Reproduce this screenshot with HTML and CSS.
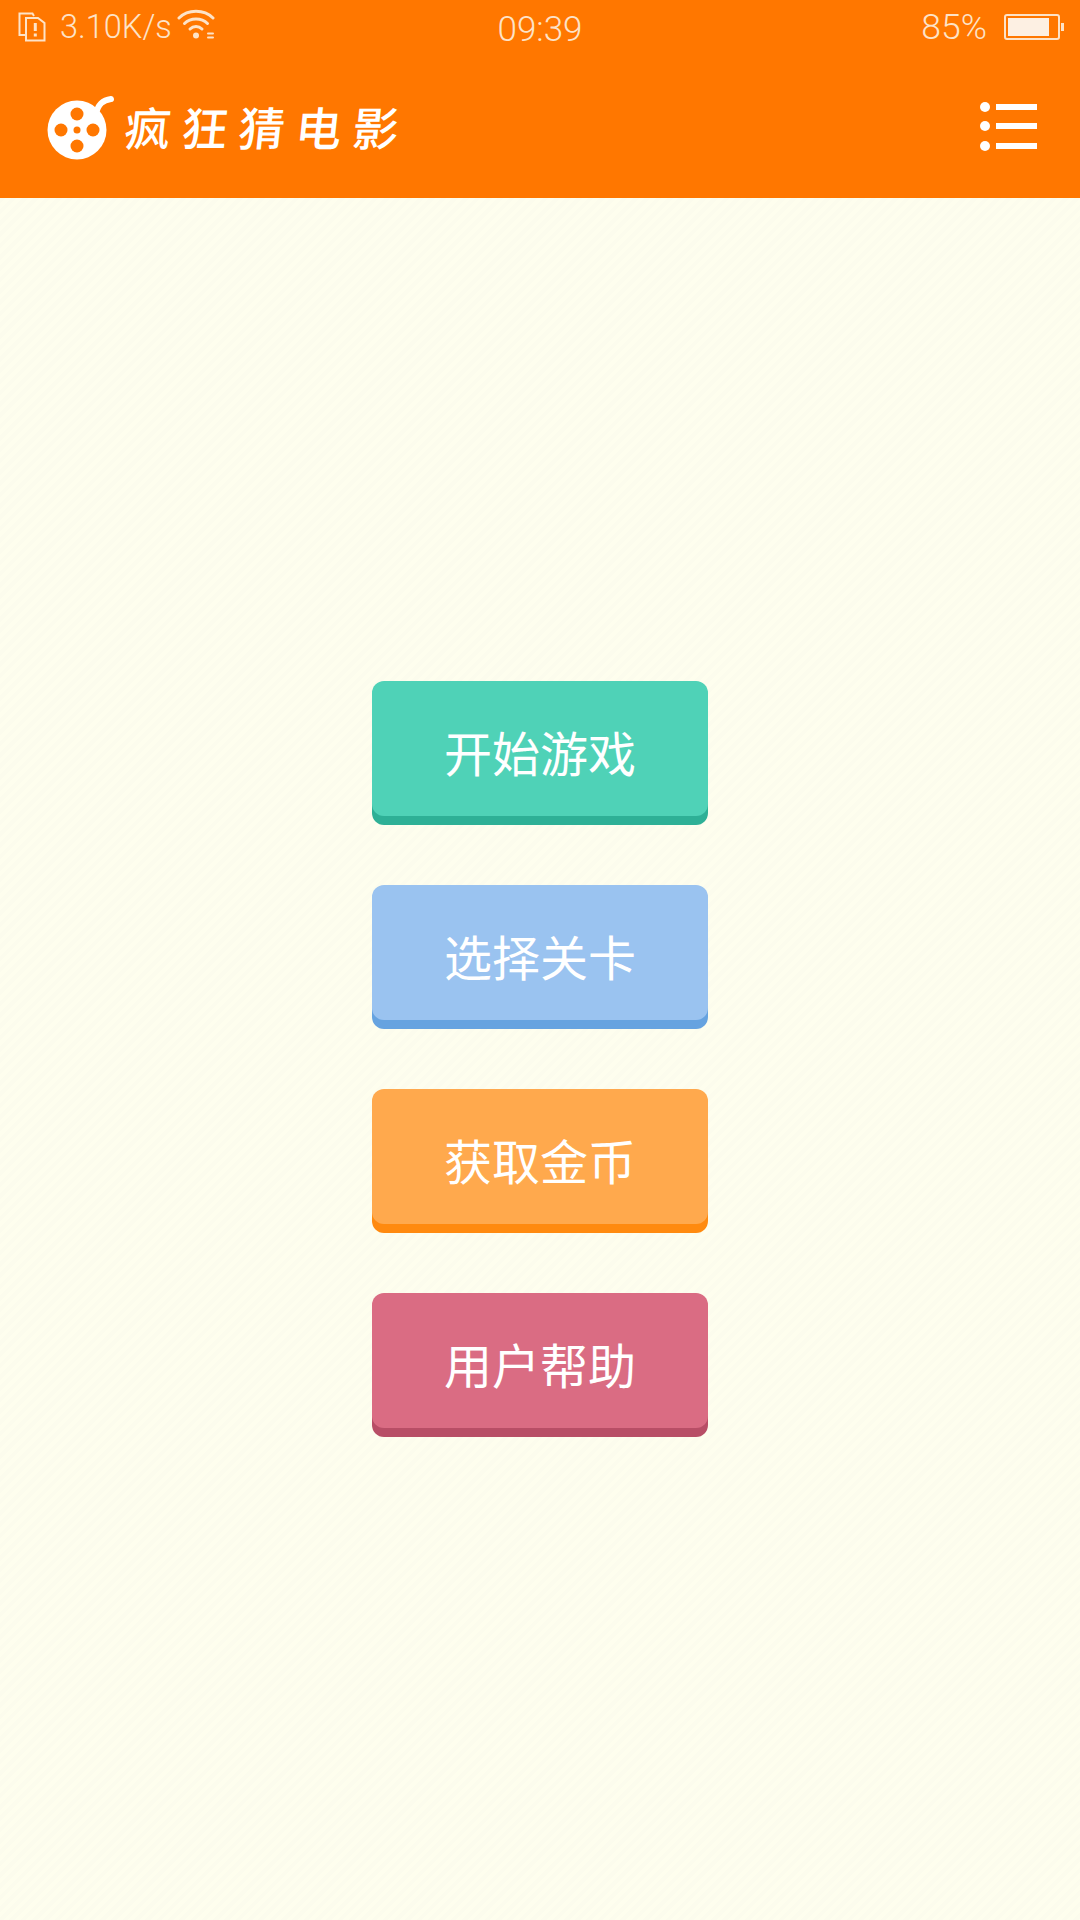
FILE: index.html
```html
<!DOCTYPE html>
<html lang="zh-CN">

	<head>
		<meta charset="UTF-8">
		<meta name="viewport" content="width=device-width, initial-scale=1.0">
		<title>疯狂猜电影</title>
		<link rel="stylesheet" href="styles.css">
	</head>

	<body>

		<!-- 状态栏 -->
		<div class="statusbar">
			<div class="status-left">
				<svg class="sim-icon" width="28" height="30" viewBox="0 0 28 30" fill="none" stroke="#fde3c8" stroke-width="2">
					<path d="M8 23H1.500V1.500H14.500L16 4" />
					<path d="M8 6H20L26.500 11V28.500H8Z" />
					<path d="M17.300 11V19M17.300 21.500V24.500" stroke-width="3" />
				</svg>
				<span class="speed">3.10K/s</span>
				<svg class="wifi-icon" width="38" height="30" viewBox="0 0 38 30" fill="none" stroke="#fde3c8" stroke-width="3" stroke-linecap="round">
					<path d="M2 9C11 0 27 0 36 9" />
					<path d="M7.500 14.500C13.500 8.500 24.500 8.500 30.500 14.500" />
					<path d="M13 20C16.500 16.500 21.500 16.500 25 20" />
					<circle cx="19" cy="26.500" r="3" fill="#fde3c8" stroke="none" />
					<path d="M31 24.500H36M31 28.500H36" stroke-width="2" />
				</svg>
			</div>
			<span class="clock">09:39</span>
			<div class="status-right">
				<span class="percent">85%</span>
				<div class="battery">
					<div class="battery-level"></div>
				</div>
				<div class="battery-cap"></div>
			</div>
		</div>

		<!-- 标题栏 -->
		<div class="toolbar">
			<div class="brand">
				<svg class="logo" width="68" height="68" viewBox="0 0 68 68">
					<path d="M49 22C51 12 56 8 64 7" fill="none" stroke="#fff" stroke-width="6" stroke-linecap="round" />
					<circle cx="30" cy="38" r="29.500" fill="#fff" />
					<g fill="#ff7700">
						<circle cx="30" cy="22" r="6.500" />
						<circle cx="30" cy="54" r="6.500" />
						<circle cx="14" cy="38" r="6.500" />
						<circle cx="46" cy="38" r="6.500" />
						<circle cx="30" cy="38" r="3.500" />
					</g>
				</svg>
				<span class="brand-name">疯狂猜电影</span>
			</div>
			<div class="menu">
				<div class="menu-row"><i></i><b></b></div>
				<div class="menu-row"><i></i><b></b></div>
				<div class="menu-row"><i></i><b></b></div>
			</div>
		</div>

		<!-- 主菜单 -->
		<div class="content">
			<a class="btn btn-green">开始游戏</a>
			<a class="btn btn-blue">选择关卡</a>
			<a class="btn btn-orange">获取金币</a>
			<a class="btn btn-red">用户帮助</a>
		</div>

	</body>

</html>
```

FILE: styles.css
```css
body {
	margin: 0;
	padding: 0;
	width: 1080px;
	height: 1920px;
	overflow: hidden;
	font-family: "Noto Sans CJK SC", "Noto Sans", sans-serif;
	background-color: #fefeee;
	background-image: repeating-linear-gradient(135deg, #fefeee 0, #fefeee 4px, #fcfced 4px, #fcfced 8px);
}

.statusbar {
	position: relative;
	height: 54px;
	background-color: #ff7700;
	color: #fde3c8;
	font-family: Roboto, "Noto Sans", sans-serif;
	font-weight: 300;
	font-size: 33px;
	display: flex;
	justify-content: space-between;
	align-items: center;
	padding: 0 16px 0 18px;
}

.status-left {
	display: flex;
	align-items: center;
}

.speed {
	margin-left: 14px;
	margin-right: 5px;
	font-size: 32.500px;
}

.wifi-icon {
	margin-top: -6px;
}

/* 时间固定在正中 */
.clock {
	position: absolute;
	left: 0;
	right: 0;
	top: 10px;
	text-align: center;
	line-height: 40px;
	font-size: 35px;
}

.status-right {
	display: flex;
	align-items: center;
}

.percent {
	margin-right: 17px;
	font-size: 35.500px;
}

.battery {
	box-sizing: border-box;
	width: 56px;
	height: 26px;
	border: 2px solid #fde3c8;
	border-radius: 3px;
	padding: 2px;
}

.battery-level {
	width: 41px;
	height: 100%;
	background-color: #fdf0e3;
}

.battery-cap {
	width: 3px;
	height: 8px;
	margin-left: 1px;
	background-color: #fde3c8;
}

.toolbar {
	height: 144px;
	background-color: #ff7700;
	display: flex;
	justify-content: space-between;
	align-items: center;
	padding: 0 43px 0 47px;
}

.brand {
	display: flex;
	align-items: center;
}

.brand-name {
	margin-left: 10px;
	color: #fff;
	font-size: 46px;
	font-weight: 500;
	letter-spacing: 11px;
	line-height: 60px;
	transform: skewX(-6deg);
}

.menu {
	display: flex;
	flex-direction: column;
	gap: 9.500px;
}

.menu-row {
	display: flex;
	align-items: center;
	gap: 6px;
}

.menu-row i {
	width: 10px;
	height: 10px;
	border-radius: 50%;
	background-color: #fff;
}

.menu-row b {
	width: 41px;
	height: 6px;
	background-color: #fff;
}

.content {
	display: flex;
	flex-direction: column;
	align-items: center;
	gap: 69px;
	padding-top: 483px;
}

/* 底边用阴影做出按钮的厚度 */
.btn {
	box-sizing: border-box;
	width: 336px;
	height: 135px;
	border-radius: 12px;
	display: flex;
	justify-content: center;
	align-items: center;
	padding-top: 4px;
	color: #fff;
	font-size: 48px;
	font-weight: 400;
}

.btn-green {
	background-color: #4fd2b7;
	box-shadow: 0 9px 0 #2eb096;
}

.btn-blue {
	background-color: #9ac3f0;
	box-shadow: 0 9px 0 #66a3e0;
}

.btn-orange {
	background-color: #ffa94d;
	box-shadow: 0 9px 0 #ff8a0f;
}

.btn-red {
	background-color: #da6c83;
	box-shadow: 0 9px 0 #b84e66;
}
```
